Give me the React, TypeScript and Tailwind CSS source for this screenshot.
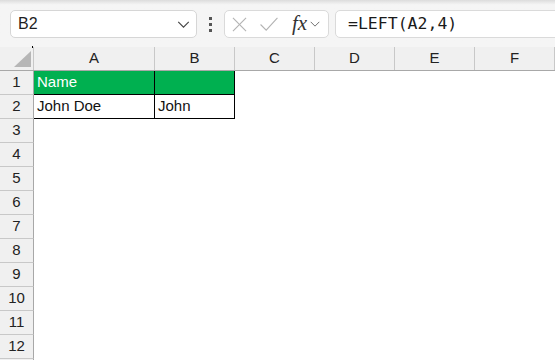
import React from 'react';

const cols = [
  { label: 'A', w: 'w-[121px]' },
  { label: 'B', w: 'w-[80px]' },
  { label: 'C', w: 'w-[80px]' },
  { label: 'D', w: 'w-[80px]' },
  { label: 'E', w: 'w-[80px]' },
  { label: 'F', w: 'w-[80px]' },
];

const rows = Array.from({ length: 13 }, (_, i) => i + 1);

function Chevron({ className }: { className?: string }) {
  return (
    <svg viewBox="0 0 14 8" className={className} fill="none" stroke="currentColor" strokeWidth="1.3">
      <polyline points="1,1 7,7 13,1" />
    </svg>
  );
}

function cellText(r: number, c: number) {
  if (r === 1 && c === 0) return 'Name';
  if (r === 2 && c === 0) return 'John Doe';
  if (r === 2 && c === 1) return 'John';
  return '';
}

export default function App() {
  return (
    <div className="w-[555px] h-[360px] overflow-hidden bg-white text-[#1f1f1f] font-['Liberation_Sans',Arial,sans-serif]">
      {/* toolbar */}
      <div className="h-[47px] overflow-hidden bg-gradient-to-b from-[#dcdcdc] via-[#f5f5f5] via-10% to-[#f5f5f5] flex items-start pt-[10px]">
        <div className="ml-[10px] shrink-0 w-[187px] h-[28px] rounded-[5px] border border-[#d6d6d6] bg-white flex items-center pl-[7px] pr-[6px]">
          <span className="text-[16px] flex-1">B2</span>
          <Chevron className="w-[13px] h-[7px] text-[#444]" />
        </div>
        <div className="shrink-0 w-[27px] h-[28px] flex flex-col items-center justify-center gap-[3px]">
          <span className="w-[3px] h-[3px] bg-[#555]" />
          <span className="w-[3px] h-[3px] bg-[#555]" />
          <span className="w-[3px] h-[3px] bg-[#555]" />
        </div>
        <div className="shrink-0 w-[105px] h-[28px] rounded-[5px] border border-[#dadada] bg-white flex items-center pl-[7px]">
          <svg viewBox="0 0 16 16" className="w-[15px] h-[15px] text-[#b3b3b3]" fill="none" stroke="currentColor" strokeWidth="1.2">
            <line x1="1" y1="1" x2="15" y2="15" />
            <line x1="15" y1="1" x2="1" y2="15" />
          </svg>
          <svg viewBox="0 0 20 16" className="w-[20px] h-[15px] ml-[12px] text-[#b3b3b3]" fill="none" stroke="currentColor" strokeWidth="1.2">
            <polyline points="1,8 7,14 19,1" />
          </svg>
          <span className="ml-[13px] font-['Liberation_Serif',serif] italic text-[21px] leading-none text-[#333] -mt-[2px]">fx</span>
          <Chevron className="ml-[3px] w-[10px] h-[6px] text-[#666]" />
        </div>
        <div className="ml-[6px] shrink-0 w-[240px] h-[28px] rounded-l-[5px] border border-[#dadada] bg-white flex items-center pl-[12px]">
          <span className="font-['DejaVu_Sans_Mono',monospace] text-[16.5px] text-[#1a1a1a]">=LEFT(A2,4)</span>
        </div>
      </div>

      {/* column headers */}
      <div className="flex h-[24px] bg-[#f0f0f0] border-b border-[#a8a8a8]">
        <div className="w-[34px] shrink-0 border-r border-[#c8c8c8] relative">
          <span className="absolute right-0 -top-px w-px h-[2px] bg-black" />
          <svg viewBox="0 0 17 16" className="absolute left-[14px] top-[4px] w-[17px] h-[16px]">
            <polygon points="17,0 17,16 0,16" fill="#b6b6b6" />
          </svg>
        </div>
        {cols.map((c) => (
          <div key={c.label} className={`${c.w} shrink-0 border-r border-[#c8c8c8] flex items-center justify-center text-[15px] text-[#222]`}>
            {c.label}
          </div>
        ))}
        <div className="flex-1" />
      </div>

      {/* rows */}
      {rows.map((r) => (
        <div key={r} className="flex h-[24px]">
          <div className="w-[34px] shrink-0 bg-[#f0f0f0] border-r border-b border-r-[#a8a8a8] border-b-[#c8c8c8] flex items-center justify-center text-[15px] text-[#222]">
            {r <= 12 ? r : ''}
          </div>
          {cols.map((c, ci) => {
            const styled = r <= 2 && ci <= 1;
            const green = r === 1 && ci <= 1;
            return (
              <div
                key={c.label}
                className={`${c.w} shrink-0 border-r border-b flex items-end pl-[3px] pb-[1px] text-[15px] ${
                  styled ? 'border-black' : 'border-transparent'
                } ${green ? 'bg-[#00b050] text-white' : 'text-[#111]'}`}
              >
                {cellText(r, ci)}
              </div>
            );
          })}
          <div className="flex-1" />
        </div>
      ))}
    </div>
  );
}
